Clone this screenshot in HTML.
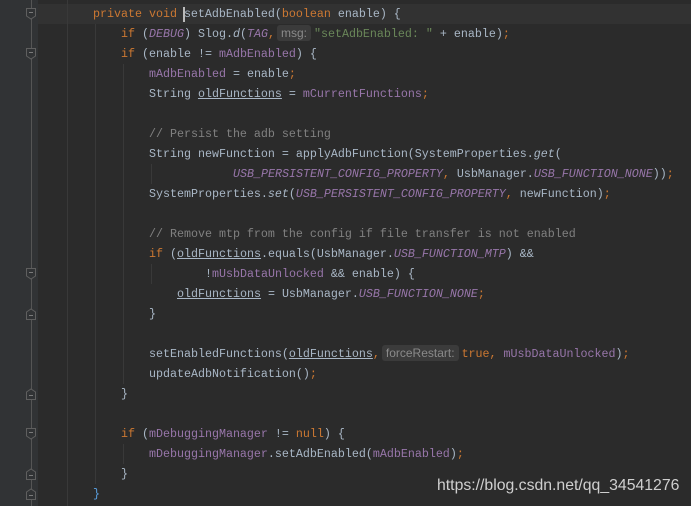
<!DOCTYPE html>
<html><head><meta charset="utf-8"><style>
body{margin:0;width:691px;height:506px;background:#2b2b2b;overflow:hidden;position:relative;font-family:"Liberation Mono",monospace;}
.g{position:absolute;left:0;top:0;width:38px;height:506px;background:#313335;}
.l{position:absolute;left:0;height:20px;line-height:20px;font-size:11.67px;color:#a9b7c6;white-space:pre;}
.k{color:#cc7832}.f{color:#9876aa}.s{color:#6a8759}.c{color:#808080}.i{font-style:italic}.u{text-decoration:underline}
.h{display:inline-block;background:#3b3b3b;color:#8a8a8a;font-family:"Liberation Sans",sans-serif;font-size:12px;line-height:16px;padding:0 4px;border-radius:3px;margin:0 3px 0 2px;}
.v{position:absolute;width:1px;background:#393939;}
.fm{position:absolute;left:26px;width:11px;height:12px;}
</style></head><body>
<div class="g"></div>
<div style="position:absolute;left:38px;top:4px;width:653px;height:20px;background:#323232"></div>
<div class="v" style="left:31px;top:0;height:506px;background:#555"></div>
<div class="v" style="left:67px;top:0;height:506px"></div>
<div class="v" style="left:95px;top:24px;height:460px"></div>
<div class="v" style="left:123px;top:64px;height:320px"></div>
<div class="v" style="left:151px;top:164px;height:20px"></div>
<div class="v" style="left:151px;top:264px;height:20px"></div>
<div class="v" style="left:123px;top:444px;height:20px"></div>
<svg class="fm" style="top:8px" viewBox="0 0 11 12"><path d="M0.5 0.5H9.5V8L5 11L0.5 8Z" fill="#313335" stroke="#5f5f5f"/><path d="M3 4.5H7" stroke="#7a7a7a"/></svg>
<svg class="fm" style="top:48px" viewBox="0 0 11 12"><path d="M0.5 0.5H9.5V8L5 11L0.5 8Z" fill="#313335" stroke="#5f5f5f"/><path d="M3 4.5H7" stroke="#7a7a7a"/></svg>
<svg class="fm" style="top:268px" viewBox="0 0 11 12"><path d="M0.5 0.5H9.5V8L5 11L0.5 8Z" fill="#313335" stroke="#5f5f5f"/><path d="M3 4.5H7" stroke="#7a7a7a"/></svg>
<svg class="fm" style="top:428px" viewBox="0 0 11 12"><path d="M0.5 0.5H9.5V8L5 11L0.5 8Z" fill="#313335" stroke="#5f5f5f"/><path d="M3 4.5H7" stroke="#7a7a7a"/></svg>
<svg class="fm" style="top:308px" viewBox="0 0 11 12"><path d="M0.5 11.5H9.5V4L5 1L0.5 4Z" fill="#313335" stroke="#5f5f5f"/><path d="M3 7.5H7" stroke="#7a7a7a"/></svg>
<svg class="fm" style="top:388px" viewBox="0 0 11 12"><path d="M0.5 11.5H9.5V4L5 1L0.5 4Z" fill="#313335" stroke="#5f5f5f"/><path d="M3 7.5H7" stroke="#7a7a7a"/></svg>
<svg class="fm" style="top:468px" viewBox="0 0 11 12"><path d="M0.5 11.5H9.5V4L5 1L0.5 4Z" fill="#313335" stroke="#5f5f5f"/><path d="M3 7.5H7" stroke="#7a7a7a"/></svg>
<svg class="fm" style="top:488px" viewBox="0 0 11 12"><path d="M0.5 11.5H9.5V4L5 1L0.5 4Z" fill="#313335" stroke="#5f5f5f"/><path d="M3 7.5H7" stroke="#7a7a7a"/></svg>
<div style="position:absolute;left:183px;top:7px;width:2px;height:15px;background:#bbb"></div>

<div class="l" style="top:4px;left:93px"><span class="k">private void </span>setAdbEnabled(<span class="k">boolean </span>enable) {</div>
<div class="l" style="top:24px;left:121px"><span class="k">if </span>(<span class="f i">DEBUG</span>) Slog.<span class="i">d</span>(<span class="f i">TAG</span><span class="k">,</span><span class="h">msg:</span><span class="s">"setAdbEnabled: " </span>+ enable)<span class="k">;</span></div>
<div class="l" style="top:44px;left:121px"><span class="k">if </span>(enable != <span class="f">mAdbEnabled</span>) {</div>
<div class="l" style="top:64px;left:149px"><span class="f">mAdbEnabled </span>= enable<span class="k">;</span></div>
<div class="l" style="top:84px;left:149px">String <span class="u">oldFunctions</span> = <span class="f">mCurrentFunctions</span><span class="k">;</span></div>
<div class="l" style="top:124px;left:149px"><span class="c">// Persist the adb setting</span></div>
<div class="l" style="top:144px;left:149px">String newFunction = applyAdbFunction(SystemProperties.<span class="i">get</span>(</div>
<div class="l" style="top:164px;left:233px"><span class="f i">USB_PERSISTENT_CONFIG_PROPERTY</span><span class="k">, </span>UsbManager.<span class="f i">USB_FUNCTION_NONE</span>))<span class="k">;</span></div>
<div class="l" style="top:184px;left:149px">SystemProperties.<span class="i">set</span>(<span class="f i">USB_PERSISTENT_CONFIG_PROPERTY</span><span class="k">, </span>newFunction)<span class="k">;</span></div>
<div class="l" style="top:224px;left:149px"><span class="c">// Remove mtp from the config if file transfer is not enabled</span></div>
<div class="l" style="top:244px;left:149px"><span class="k">if </span>(<span class="u">oldFunctions</span>.equals(UsbManager.<span class="f i">USB_FUNCTION_MTP</span>) &amp;&amp;</div>
<div class="l" style="top:264px;left:205px">!<span class="f">mUsbDataUnlocked </span>&amp;&amp; enable) {</div>
<div class="l" style="top:284px;left:177px"><span class="u">oldFunctions</span> = UsbManager.<span class="f i">USB_FUNCTION_NONE</span><span class="k">;</span></div>
<div class="l" style="top:304px;left:149px">}</div>
<div class="l" style="top:344px;left:149px">setEnabledFunctions(<span class="u">oldFunctions</span><span class="k">,</span><span class="h">forceRestart:</span><span class="k">true, </span><span class="f">mUsbDataUnlocked</span>)<span class="k">;</span></div>
<div class="l" style="top:364px;left:149px">updateAdbNotification()<span class="k">;</span></div>
<div class="l" style="top:384px;left:121px">}</div>
<div class="l" style="top:424px;left:121px"><span class="k">if </span>(<span class="f">mDebuggingManager </span>!= <span class="k">null</span>) {</div>
<div class="l" style="top:444px;left:149px"><span class="f">mDebuggingManager</span>.setAdbEnabled(<span class="f">mAdbEnabled</span>)<span class="k">;</span></div>
<div class="l" style="top:464px;left:121px">}</div>
<div class="l" style="top:484px;left:93px;color:#5aa0e0">}</div>
<div style="position:absolute;left:437px;top:477px;font-family:'Liberation Sans',sans-serif;font-size:15.8px;color:#cfcfcf;white-space:nowrap">https://blog.csdn.net/qq_34541276</div>
</body></html>
